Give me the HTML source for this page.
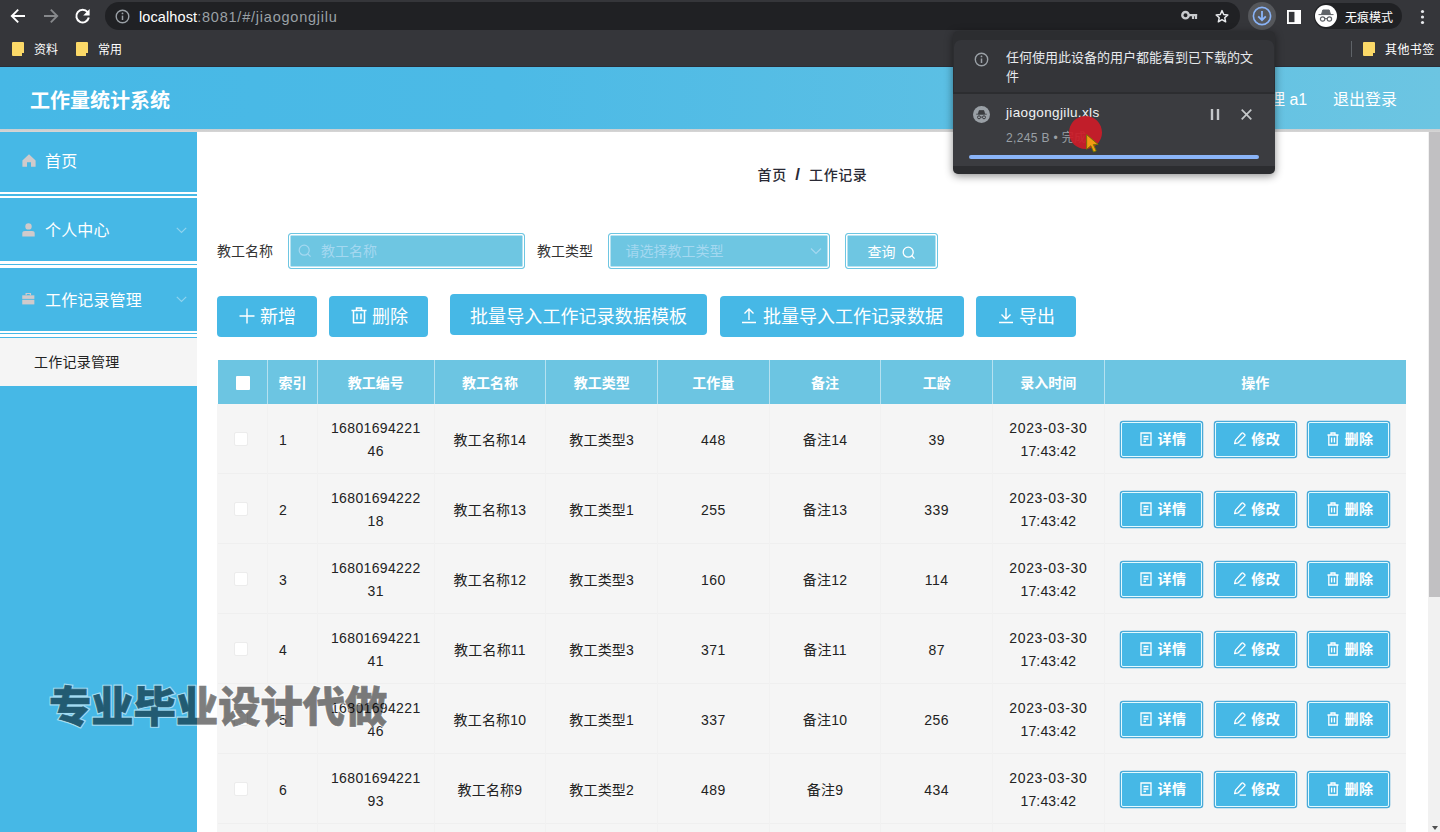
<!DOCTYPE html>
<html lang="zh-CN">
<head>
<meta charset="utf-8">
<title>工作量统计系统</title>
<style>
*{box-sizing:border-box;margin:0;padding:0}
html,body{width:1440px;height:832px;overflow:hidden;background:#fff}
body{position:relative;font-family:"Liberation Sans","Noto Sans CJK SC",sans-serif;font-size:14px;color:#333}
.abs{position:absolute}
/* ---------- browser chrome ---------- */
#chrome{position:absolute;left:0;top:0;width:1440px;height:67px;background:#35363a;border-bottom:1px solid #2b2e38}
#omni{position:absolute;left:105px;top:2px;width:1135px;height:28px;border-radius:14px;background:#202124}
#url{position:absolute;left:139px;top:1px;height:32px;line-height:32px;font-size:14.5px;color:#9aa0a6;white-space:nowrap;letter-spacing:0.1px}
#url b{font-weight:normal;color:#fff}
.bm{position:absolute;top:41px;height:18px;line-height:18px;font-size:12px;color:#fff;white-space:nowrap}
.folder{position:absolute;top:42px;width:12px;height:14px;background:#fbd968;border-radius:1px}
.folder:after{content:"";position:absolute;right:0;bottom:0;width:2px;height:3px;background:#35363a}
#chip{position:absolute;left:1314px;top:3px;width:88px;height:26px;border-radius:13px;background:#202124}
#chip .av{position:absolute;left:1px;top:2px;width:22px;height:22px;border-radius:11px;background:#fff}
#chip span{position:absolute;left:31px;top:1.5px;line-height:26px;font-size:12px;color:#fff;white-space:nowrap}
/* ---------- app header ---------- */
#hdr{position:absolute;left:0;top:67px;width:1440px;height:62px;background:linear-gradient(90deg,#46b8e6 0%,#4cbae6 35%,#6cc5e2 100%)}
#hdr .title{position:absolute;left:30px;top:0;line-height:68px;font-size:20px;font-weight:bold;color:#fff;white-space:nowrap}
#hdr .r{position:absolute;top:0;line-height:66px;font-size:16px;color:#fff;white-space:nowrap}
#hline{position:absolute;left:0;top:129px;width:1440px;height:3px;background:linear-gradient(#c4d0d6,#cfcfcf 40%,#d6d6d6)}
/* ---------- sidebar ---------- */
#side{position:absolute;left:0;top:132px;width:197px;height:700px;background:#46b8e6}
.mi{position:absolute;left:0;width:197px;color:#fff;font-size:16px;white-space:nowrap;letter-spacing:.15px}
.mi .t{position:absolute;left:45px;top:0}
.wl{position:absolute;left:0;width:197px;height:3px;background:#fff}
#sub{position:absolute;left:0;top:205.8px;width:197px;height:48.7px;background:#f5f5f5;color:#222;font-size:14px;line-height:48.6px;padding-left:34px;white-space:nowrap;letter-spacing:.25px}
/* ---------- main ---------- */
#main{position:absolute;left:197px;top:132px;width:1231px;height:700px;background:#fff}
#sb{position:absolute;left:1428px;top:132px;width:12px;height:700px;background:#f1f1f1}
#sb .th{position:absolute;left:1px;top:0;width:11px;height:464.5px;background:#c1c0c2}
#sb .ar{position:absolute;left:4px;bottom:2px;width:0;height:0;border-left:3.5px solid transparent;border-right:3.5px solid transparent;border-top:4px solid #505050}

/* ---------- content ---------- */
#bc{position:absolute;left:197px;top:163px;width:1231px;text-align:center;font-size:14px;font-weight:500;line-height:24px;color:#2a2a35;white-space:nowrap;letter-spacing:.6px}
#bc i{font-style:normal;font-weight:bold;font-size:17px;margin:0 8.5px 0 8.5px}
.lbl{position:absolute;top:233px;height:36px;line-height:36px;font-size:14px;color:#333;white-space:nowrap}
.inp{position:absolute;top:233px;height:36px;border:1px solid #6ec6e2;background:#6ec6e2;box-shadow:inset 0 0 0 1.5px #fff;border-radius:3px}
.inp .ph{position:absolute;top:0;line-height:35px;font-size:14px;color:#a4d8f0;white-space:nowrap}
.qbtn{position:absolute;left:844.5px;top:233px;width:93px;height:36px;border:1px solid #6ec6e2;background:#6ec6e2;box-shadow:inset 0 0 0 1.5px #fff;border-radius:3px;color:#fff;font-size:14px;white-space:nowrap}
.btn{position:absolute;height:41px;border-radius:4px;background:#46b8e6;color:#fff;font-size:18px;line-height:41px;white-space:nowrap}
.btn span{position:absolute;top:.8px}
.btn svg{position:absolute}

/* ---------- table ---------- */
#tb{position:absolute;left:217px;top:360px;width:1189px;height:472px;background:#f5f5f5;overflow:hidden}
#th{position:absolute;left:0;top:0;width:1189px;height:44px;background:#6cc5e2;border-left:1px solid #fff}
.hc{position:absolute;top:0;height:44px;line-height:46px;text-align:center;color:#fff;font-weight:bold;font-size:14px;border-right:1px solid #b5e1f0;white-space:nowrap}
.row{position:absolute;left:1px;width:1188px;height:70px;border-bottom:1px solid #efefef}
.c{position:absolute;top:0;height:70px;text-align:center;font-size:14px;line-height:23px;color:#222;white-space:nowrap;border-right:1px solid #f1f1f1;padding-top:1px;display:flex;align-items:center;justify-content:center}
.cb{position:absolute;left:16px;top:28px;width:14px;height:14px;background:#fff;border:1px solid #ececec;border-radius:2px}
.ab{position:absolute;top:17.5px;width:81px;height:35.5px;border:1.75px solid #e2faff;background:#46b8e6;box-shadow:0 0 0 1.25px #4aa9d8;border-radius:2px;color:#fff;font-size:14px;font-weight:bold;white-space:nowrap}
.ab span{position:absolute;left:35.5px;top:0;line-height:33.5px;letter-spacing:.6px}
.ab svg{position:absolute;left:17.5px;top:9.5px}

/* ---------- popup ---------- */
#pop{position:absolute;left:953px;top:31px;width:322px;height:143px;border-radius:5px;background:#2c2d30;box-shadow:0 2px 8px rgba(0,0,0,.45);overflow:hidden;color:#e8eaed}
#pop .it{position:absolute;left:0;top:63px;width:322px;height:72px;background:#3b3c40}
#pop .ms{position:absolute;left:1px;top:9px;width:320px;height:52px;background:#343539;border-radius:7px 7px 0 0}
#pop .m{position:absolute;left:53px;top:18px;width:256px;font-size:13px;line-height:18.5px;color:#e8eaed}
#pop .fn{position:absolute;left:53px;top:72px;font-size:13.5px;line-height:20px;color:#f1f3f4;white-space:nowrap;letter-spacing:.36px}
#pop .st{position:absolute;left:53px;top:97px;font-size:12px;line-height:20px;color:#9aa0a6;white-space:nowrap;letter-spacing:.35px}
#pop .pg{position:absolute;left:16px;top:124.3px;width:290px;height:3.5px;border-radius:2px;background:#8ab4f8}
#wm{position:absolute;left:49px;top:674px;font-family:"Noto Sans CJK SC",sans-serif;font-weight:900;font-size:42.3px;line-height:60px;color:#000;-webkit-text-stroke:.7px #000;white-space:nowrap;opacity:.5}
#wm:before{content:"专业毕业设计代做";position:absolute;left:0;top:0;z-index:-1;color:#fff;-webkit-text-stroke:3px #fff}
#clk{position:absolute;left:1069px;top:116px;width:33px;height:33px;border-radius:50%;background:rgba(205,28,40,.92)}
</style>
</head>
<body>
<div id="chrome">
  <div id="omni"></div>
  <svg class="abs" style="left:10px;top:8px" width="16" height="16" viewBox="0 0 16 16"><path d="M15 8H2.2M8.2 1.6L1.8 8L8.2 14.4" fill="none" stroke="#fff" stroke-width="1.9"/></svg>
  <svg class="abs" style="left:43px;top:8px" width="16" height="16" viewBox="0 0 16 16"><path d="M1 8H13.8M7.8 1.6L14.2 8L7.8 14.4" fill="none" stroke="#86888b" stroke-width="1.9"/></svg>
  <svg class="abs" style="left:74px;top:8px" width="17" height="17" viewBox="0 0 17 17"><path d="M13.6 4.2A6.3 6.3 0 1 0 14.8 9.6" fill="none" stroke="#fff" stroke-width="2"/><path d="M15.6 1V7.4H9.2Z" fill="#fff"/></svg>
  <svg class="abs" style="left:115px;top:9px" width="15" height="15" viewBox="0 0 15 15"><circle cx="7.5" cy="7.5" r="6.3" fill="none" stroke="#9aa0a6" stroke-width="1.4"/><path d="M7.5 6.6V11" stroke="#9aa0a6" stroke-width="1.5"/><circle cx="7.5" cy="4.4" r="0.9" fill="#9aa0a6"/></svg>
  <svg class="abs" style="left:1181px;top:10px" width="17" height="11" viewBox="0 0 17 11"><circle cx="4.5" cy="5.2" r="3.2" fill="none" stroke="#c8cacd" stroke-width="2.4"/><path d="M7.5 5.2H16.2M12 5.2V9M15 5.2V9" stroke="#c8cacd" stroke-width="2.2" fill="none"/></svg>
  <svg class="abs" style="left:1215px;top:9px" width="14" height="14" viewBox="0 0 18 17"><path d="M9 1.6L11.2 6.5L16.5 7.1L12.5 10.7L13.7 16L9 13.2L4.3 16L5.5 10.7L1.5 7.1L6.8 6.5Z" fill="none" stroke="#e8eaed" stroke-width="1.9" stroke-linejoin="round"/></svg>
  <div class="abs" style="left:1248px;top:2px;width:28px;height:28px;border-radius:14px;background:#55575b"></div>
  <svg class="abs" style="left:1252px;top:6px" width="20" height="20" viewBox="0 0 20 20"><circle cx="10" cy="10" r="8.6" fill="none" stroke="#8ab4f8" stroke-width="1.6"/><path d="M10 5V14M6.2 10.4L10 14.2L13.8 10.4" fill="none" stroke="#8ab4f8" stroke-width="1.8"/></svg>
  <svg class="abs" style="left:1287px;top:9.5px" width="14" height="14" viewBox="0 0 15 15"><rect x="1" y="1" width="13" height="13" fill="none" stroke="#fff" stroke-width="2"/><rect x="8" y="1" width="6" height="13" fill="#fff"/></svg>
  <svg class="abs" style="left:1420px;top:9px" width="5" height="16" viewBox="0 0 5 16"><circle cx="2.5" cy="2.5" r="1.6" fill="#e8eaed"/><circle cx="2.5" cy="8" r="1.6" fill="#e8eaed"/><circle cx="2.5" cy="13.5" r="1.6" fill="#e8eaed"/></svg>

  <div id="url"><b>localhost</b><span style="letter-spacing:0.78px">:8081/#/jiaogongjilu</span></div>
  <div class="folder" style="left:12px"></div><div class="bm" style="left:34px">资料</div>
  <div class="folder" style="left:76px"></div><div class="bm" style="left:98px">常用</div>
  <div class="abs" style="left:1351px;top:41px;width:1px;height:16px;background:#5f6368"></div>
  <div class="folder" style="left:1363px"></div><div class="bm" style="left:1385px;letter-spacing:.4px">其他书签</div>
  <div id="chip"><div class="av"><svg class="abs" style="left:3px;top:4px" width="16" height="14" viewBox="0 0 16 14"><path d="M0.5 5.6H15.5M3.6 5.2L4.8 1H11.2L12.4 5.2Z" fill="#5f6368" stroke="#5f6368" stroke-width="1"/><circle cx="4.6" cy="10" r="2.2" fill="none" stroke="#5f6368" stroke-width="1.2"/><circle cx="11.4" cy="10" r="2.2" fill="none" stroke="#5f6368" stroke-width="1.2"/><path d="M6.8 9.6H9.2" stroke="#5f6368" stroke-width="1.1"/></svg></div><span>无痕模式</span></div>
</div>
<div id="hdr">
  <div class="title">工作量统计系统</div>
  <div class="r" style="left:1253px">管理 a1</div>
  <div class="r" style="left:1333px">退出登录</div>
</div>
<div id="hline"></div>
<div id="side">
  <div class="mi" style="top:0;height:60px;line-height:59.6px"><svg class="abs" style="left:22px;top:22px" width="14" height="13" viewBox="0 0 14 13"><path d="M7 0.3L0.4 6.6V12.7H5V8.2H9V12.7H13.6V6.6Z" fill="#d0cacb"/></svg><span class="t">首页</span></div>
  <div class="wl" style="top:59.9px;height:2.4px"></div><div class="wl" style="top:64px;height:2.4px"></div>
  <div class="mi" style="top:67px;height:62px;line-height:64.4px"><svg class="abs" style="left:22px;top:24px" width="13" height="14" viewBox="0 0 13 14"><circle cx="6.5" cy="3.4" r="3.2" fill="#d0cacb"/><path d="M0.3 13.6V10.4Q0.3 8 3 8H10Q12.7 8 12.7 10.4V13.6Z" fill="#d0cacb"/></svg><span class="t">个人中心</span><svg class="abs" style="left:176px;top:28px" width="11" height="7" viewBox="0 0 11 7"><path d="M0.8 0.8L5.5 5.5L10.2 0.8" fill="none" stroke="#8fd3ee" stroke-width="1.2"/></svg></div>
  <div class="wl" style="top:128.8px;height:3.1px"></div><div class="wl" style="top:132.9px;height:3.1px"></div>
  <div class="mi" style="top:136px;height:62px;line-height:66px"><svg class="abs" style="left:22px;top:25.3px" width="12.6" height="11.6" viewBox="0 0 14 13"><path d="M4.6 2.6V0.5H9.4V2.6" fill="none" stroke="#d0cacb" stroke-width="1.4"/><rect x="0.2" y="2.6" width="13.6" height="4" fill="#d0cacb"/><rect x="0.2" y="7.6" width="13.6" height="5.2" fill="#d0cacb"/></svg><span class="t">工作记录管理</span><svg class="abs" style="left:176px;top:28px" width="11" height="7" viewBox="0 0 11 7"><path d="M0.8 0.8L5.5 5.5L10.2 0.8" fill="none" stroke="#8fd3ee" stroke-width="1.2"/></svg></div>
  <div class="wl" style="top:198.6px;height:2.4px"></div><div class="wl" style="top:202.4px;height:2.4px"></div>
  <div id="sub">工作记录管理</div>
</div>
<div id="main">
</div>

<div id="bc">首页<i>/</i>工作记录</div>
<div class="lbl" style="left:217px">教工名称</div>
<div class="inp" style="left:288px;width:236.5px"><svg class="abs" style="left:9px;top:10px" width="14" height="14" viewBox="0 0 14 14"><circle cx="6.2" cy="6.2" r="5" fill="none" stroke="#a4d8f0" stroke-width="1.2"/><path d="M9.8 9.8 L12.6 12.6" stroke="#a4d8f0" stroke-width="1.2"/></svg><span class="ph" style="left:32px">教工名称</span></div>
<div class="lbl" style="left:537px">教工类型</div>
<div class="inp" style="left:607.5px;width:222px"><span class="ph" style="left:17px">请选择教工类型</span><svg class="abs" style="left:201px;top:13px" width="12" height="8" viewBox="0 0 12 8"><path d="M1 1.5 L6 6.5 L11 1.5" fill="none" stroke="#a4d8f0" stroke-width="1.2"/></svg></div>
<div class="qbtn"><span class="abs" style="left:22px;top:0;line-height:37px">查询</span><svg class="abs" style="left:56px;top:12px" width="14" height="14" viewBox="0 0 14 14"><circle cx="6.2" cy="6.2" r="5" fill="none" stroke="#fff" stroke-width="1.3"/><path d="M9.8 9.8 L12.6 12.6" stroke="#fff" stroke-width="1.3"/></svg></div>

<div class="btn" style="left:217px;top:296px;width:100px"><svg style="left:22px;top:12.2px" width="16" height="16" viewBox="0 0 16 16"><path d="M8 0.5V15.5M0.5 8H15.5" stroke="#fff" stroke-width="1.4" fill="none"/></svg><span style="left:43px">新增</span></div>
<div class="btn" style="left:329px;top:296px;width:99px"><svg style="left:21.5px;top:11px" width="16" height="17" viewBox="0 0 16 17"><path d="M0.5 3.5H15.5M5.5 3.2V1H10.5V3.2M2.5 3.5V15.7H13.5V3.5M6 6.5V12.5M10 6.5V12.5" stroke="#fff" stroke-width="1.5" fill="none"/></svg><span style="left:43px">删除</span></div>
<div class="btn" style="left:450px;top:294px;width:257px"><span style="left:20px;top:3px;letter-spacing:.1px">批量导入工作记录数据模板</span></div>
<div class="btn" style="left:720px;top:296px;width:244px"><svg style="left:21px;top:11px" width="16" height="17" viewBox="0 0 16 17"><path d="M8 13V2M3.5 6.5L8 2L12.5 6.5M1 15.5H15" stroke="#fff" stroke-width="1.4" fill="none"/></svg><span style="left:43px">批量导入工作记录数据</span></div>
<div class="btn" style="left:976px;top:296px;width:100px"><svg style="left:22px;top:10.5px" width="16" height="17" viewBox="0 0 16 17"><path d="M8 1V12M3.5 7.5L8 12L12.5 7.5M1 15.5H15" stroke="#fff" stroke-width="1.4" fill="none"/></svg><span style="left:43px">导出</span></div>
<div id="tb">
<div id="th"><div class="hc" style="left:0px;width:50px"><div class="abs" style="left:18px;top:16px;width:14px;height:14px;background:#fff;border-radius:1px"></div></div><div class="hc" style="left:50px;width:50px">索引</div><div class="hc" style="left:100px;width:116.5px">教工编号</div><div class="hc" style="left:216.5px;width:111.80000000000001px">教工名称</div><div class="hc" style="left:328.3px;width:111.69999999999999px">教工类型</div><div class="hc" style="left:440px;width:111.70000000000005px">工作量</div><div class="hc" style="left:551.7px;width:111.69999999999993px">备注</div><div class="hc" style="left:663.4px;width:111.60000000000002px">工龄</div><div class="hc" style="left:775px;width:111.70000000000005px">录入时间</div><div class="hc" style="left:886.7px;width:301.29999999999995px;border-right:none">操作</div></div>
<div class="row" style="top:44px"><div class="c" style="left:0px;width:50px"><div class="cb"></div></div><div class="c" style="padding-top:2px;letter-spacing:.45px;left:50px;width:50px;justify-content:flex-start;padding-left:11px">1</div><div class="c" style="left:100px;width:116.5px"><span style="letter-spacing:.36px">16801694221<br>46</span></div><div class="c" style="padding-top:2px;letter-spacing:.2px;left:216.5px;width:111.80000000000001px">教工名称14</div><div class="c" style="padding-top:2px;letter-spacing:.2px;left:328.3px;width:111.69999999999999px">教工类型3</div><div class="c" style="padding-top:2px;letter-spacing:.45px;left:440px;width:111.70000000000005px">448</div><div class="c" style="padding-top:2px;letter-spacing:.2px;left:551.7px;width:111.69999999999993px">备注14</div><div class="c" style="padding-top:2px;letter-spacing:.45px;left:663.4px;width:111.60000000000002px">39</div><div class="c" style="left:775px;width:111.70000000000005px"><span><span style="letter-spacing:.65px">2023-03-30</span><br><span style="letter-spacing:.15px">17:43:42</span></span></div><div class="ab" style="left:903px"><svg width="12" height="14" viewBox="0 0 12 14"><path d="M1 1H11V13H1ZM3.5 4.5H8.5M3.5 7H8.5M3.5 9.5H6" fill="none" stroke="#fff" stroke-width="1.3"/></svg><span>详情</span></div><div class="ab" style="left:996.7px"><svg width="14" height="14" viewBox="0 0 14 14"><path d="M1.6 11.6L2.5 8.1L8.7 1.2Q9.5 0.6 10.3 1.3L11.6 2.5Q12.3 3.3 11.6 4.1L5.2 10.8ZM6.6 13.2H13" fill="none" stroke="#fff" stroke-width="1.3" stroke-linejoin="round"/></svg><span>修改</span></div><div class="ab" style="left:1090px"><svg width="12" height="14" viewBox="0 0 12 14"><path d="M0.5 3H11.5M4 2.8V1H8V2.8M1.8 3V13H10.2V3M4.6 5.5V10.5M7.4 5.5V10.5" fill="none" stroke="#fff" stroke-width="1.3"/></svg><span>删除</span></div></div>
<div class="row" style="top:114px"><div class="c" style="left:0px;width:50px"><div class="cb"></div></div><div class="c" style="padding-top:2px;letter-spacing:.45px;left:50px;width:50px;justify-content:flex-start;padding-left:11px">2</div><div class="c" style="left:100px;width:116.5px"><span style="letter-spacing:.36px">16801694222<br>18</span></div><div class="c" style="padding-top:2px;letter-spacing:.2px;left:216.5px;width:111.80000000000001px">教工名称13</div><div class="c" style="padding-top:2px;letter-spacing:.2px;left:328.3px;width:111.69999999999999px">教工类型1</div><div class="c" style="padding-top:2px;letter-spacing:.45px;left:440px;width:111.70000000000005px">255</div><div class="c" style="padding-top:2px;letter-spacing:.2px;left:551.7px;width:111.69999999999993px">备注13</div><div class="c" style="padding-top:2px;letter-spacing:.45px;left:663.4px;width:111.60000000000002px">339</div><div class="c" style="left:775px;width:111.70000000000005px"><span><span style="letter-spacing:.65px">2023-03-30</span><br><span style="letter-spacing:.15px">17:43:42</span></span></div><div class="ab" style="left:903px"><svg width="12" height="14" viewBox="0 0 12 14"><path d="M1 1H11V13H1ZM3.5 4.5H8.5M3.5 7H8.5M3.5 9.5H6" fill="none" stroke="#fff" stroke-width="1.3"/></svg><span>详情</span></div><div class="ab" style="left:996.7px"><svg width="14" height="14" viewBox="0 0 14 14"><path d="M1.6 11.6L2.5 8.1L8.7 1.2Q9.5 0.6 10.3 1.3L11.6 2.5Q12.3 3.3 11.6 4.1L5.2 10.8ZM6.6 13.2H13" fill="none" stroke="#fff" stroke-width="1.3" stroke-linejoin="round"/></svg><span>修改</span></div><div class="ab" style="left:1090px"><svg width="12" height="14" viewBox="0 0 12 14"><path d="M0.5 3H11.5M4 2.8V1H8V2.8M1.8 3V13H10.2V3M4.6 5.5V10.5M7.4 5.5V10.5" fill="none" stroke="#fff" stroke-width="1.3"/></svg><span>删除</span></div></div>
<div class="row" style="top:184px"><div class="c" style="left:0px;width:50px"><div class="cb"></div></div><div class="c" style="padding-top:2px;letter-spacing:.45px;left:50px;width:50px;justify-content:flex-start;padding-left:11px">3</div><div class="c" style="left:100px;width:116.5px"><span style="letter-spacing:.36px">16801694222<br>31</span></div><div class="c" style="padding-top:2px;letter-spacing:.2px;left:216.5px;width:111.80000000000001px">教工名称12</div><div class="c" style="padding-top:2px;letter-spacing:.2px;left:328.3px;width:111.69999999999999px">教工类型3</div><div class="c" style="padding-top:2px;letter-spacing:.45px;left:440px;width:111.70000000000005px">160</div><div class="c" style="padding-top:2px;letter-spacing:.2px;left:551.7px;width:111.69999999999993px">备注12</div><div class="c" style="padding-top:2px;letter-spacing:.45px;left:663.4px;width:111.60000000000002px">114</div><div class="c" style="left:775px;width:111.70000000000005px"><span><span style="letter-spacing:.65px">2023-03-30</span><br><span style="letter-spacing:.15px">17:43:42</span></span></div><div class="ab" style="left:903px"><svg width="12" height="14" viewBox="0 0 12 14"><path d="M1 1H11V13H1ZM3.5 4.5H8.5M3.5 7H8.5M3.5 9.5H6" fill="none" stroke="#fff" stroke-width="1.3"/></svg><span>详情</span></div><div class="ab" style="left:996.7px"><svg width="14" height="14" viewBox="0 0 14 14"><path d="M1.6 11.6L2.5 8.1L8.7 1.2Q9.5 0.6 10.3 1.3L11.6 2.5Q12.3 3.3 11.6 4.1L5.2 10.8ZM6.6 13.2H13" fill="none" stroke="#fff" stroke-width="1.3" stroke-linejoin="round"/></svg><span>修改</span></div><div class="ab" style="left:1090px"><svg width="12" height="14" viewBox="0 0 12 14"><path d="M0.5 3H11.5M4 2.8V1H8V2.8M1.8 3V13H10.2V3M4.6 5.5V10.5M7.4 5.5V10.5" fill="none" stroke="#fff" stroke-width="1.3"/></svg><span>删除</span></div></div>
<div class="row" style="top:254px"><div class="c" style="left:0px;width:50px"><div class="cb"></div></div><div class="c" style="padding-top:2px;letter-spacing:.45px;left:50px;width:50px;justify-content:flex-start;padding-left:11px">4</div><div class="c" style="left:100px;width:116.5px"><span style="letter-spacing:.36px">16801694221<br>41</span></div><div class="c" style="padding-top:2px;letter-spacing:.2px;left:216.5px;width:111.80000000000001px">教工名称11</div><div class="c" style="padding-top:2px;letter-spacing:.2px;left:328.3px;width:111.69999999999999px">教工类型3</div><div class="c" style="padding-top:2px;letter-spacing:.45px;left:440px;width:111.70000000000005px">371</div><div class="c" style="padding-top:2px;letter-spacing:.2px;left:551.7px;width:111.69999999999993px">备注11</div><div class="c" style="padding-top:2px;letter-spacing:.45px;left:663.4px;width:111.60000000000002px">87</div><div class="c" style="left:775px;width:111.70000000000005px"><span><span style="letter-spacing:.65px">2023-03-30</span><br><span style="letter-spacing:.15px">17:43:42</span></span></div><div class="ab" style="left:903px"><svg width="12" height="14" viewBox="0 0 12 14"><path d="M1 1H11V13H1ZM3.5 4.5H8.5M3.5 7H8.5M3.5 9.5H6" fill="none" stroke="#fff" stroke-width="1.3"/></svg><span>详情</span></div><div class="ab" style="left:996.7px"><svg width="14" height="14" viewBox="0 0 14 14"><path d="M1.6 11.6L2.5 8.1L8.7 1.2Q9.5 0.6 10.3 1.3L11.6 2.5Q12.3 3.3 11.6 4.1L5.2 10.8ZM6.6 13.2H13" fill="none" stroke="#fff" stroke-width="1.3" stroke-linejoin="round"/></svg><span>修改</span></div><div class="ab" style="left:1090px"><svg width="12" height="14" viewBox="0 0 12 14"><path d="M0.5 3H11.5M4 2.8V1H8V2.8M1.8 3V13H10.2V3M4.6 5.5V10.5M7.4 5.5V10.5" fill="none" stroke="#fff" stroke-width="1.3"/></svg><span>删除</span></div></div>
<div class="row" style="top:324px"><div class="c" style="left:0px;width:50px"><div class="cb"></div></div><div class="c" style="padding-top:2px;letter-spacing:.45px;left:50px;width:50px;justify-content:flex-start;padding-left:11px">5</div><div class="c" style="left:100px;width:116.5px"><span style="letter-spacing:.36px">16801694221<br>46</span></div><div class="c" style="padding-top:2px;letter-spacing:.2px;left:216.5px;width:111.80000000000001px">教工名称10</div><div class="c" style="padding-top:2px;letter-spacing:.2px;left:328.3px;width:111.69999999999999px">教工类型1</div><div class="c" style="padding-top:2px;letter-spacing:.45px;left:440px;width:111.70000000000005px">337</div><div class="c" style="padding-top:2px;letter-spacing:.2px;left:551.7px;width:111.69999999999993px">备注10</div><div class="c" style="padding-top:2px;letter-spacing:.45px;left:663.4px;width:111.60000000000002px">256</div><div class="c" style="left:775px;width:111.70000000000005px"><span><span style="letter-spacing:.65px">2023-03-30</span><br><span style="letter-spacing:.15px">17:43:42</span></span></div><div class="ab" style="left:903px"><svg width="12" height="14" viewBox="0 0 12 14"><path d="M1 1H11V13H1ZM3.5 4.5H8.5M3.5 7H8.5M3.5 9.5H6" fill="none" stroke="#fff" stroke-width="1.3"/></svg><span>详情</span></div><div class="ab" style="left:996.7px"><svg width="14" height="14" viewBox="0 0 14 14"><path d="M1.6 11.6L2.5 8.1L8.7 1.2Q9.5 0.6 10.3 1.3L11.6 2.5Q12.3 3.3 11.6 4.1L5.2 10.8ZM6.6 13.2H13" fill="none" stroke="#fff" stroke-width="1.3" stroke-linejoin="round"/></svg><span>修改</span></div><div class="ab" style="left:1090px"><svg width="12" height="14" viewBox="0 0 12 14"><path d="M0.5 3H11.5M4 2.8V1H8V2.8M1.8 3V13H10.2V3M4.6 5.5V10.5M7.4 5.5V10.5" fill="none" stroke="#fff" stroke-width="1.3"/></svg><span>删除</span></div></div>
<div class="row" style="top:394px"><div class="c" style="left:0px;width:50px"><div class="cb"></div></div><div class="c" style="padding-top:2px;letter-spacing:.45px;left:50px;width:50px;justify-content:flex-start;padding-left:11px">6</div><div class="c" style="left:100px;width:116.5px"><span style="letter-spacing:.36px">16801694221<br>93</span></div><div class="c" style="padding-top:2px;letter-spacing:.2px;left:216.5px;width:111.80000000000001px">教工名称9</div><div class="c" style="padding-top:2px;letter-spacing:.2px;left:328.3px;width:111.69999999999999px">教工类型2</div><div class="c" style="padding-top:2px;letter-spacing:.45px;left:440px;width:111.70000000000005px">489</div><div class="c" style="padding-top:2px;letter-spacing:.2px;left:551.7px;width:111.69999999999993px">备注9</div><div class="c" style="padding-top:2px;letter-spacing:.45px;left:663.4px;width:111.60000000000002px">434</div><div class="c" style="left:775px;width:111.70000000000005px"><span><span style="letter-spacing:.65px">2023-03-30</span><br><span style="letter-spacing:.15px">17:43:42</span></span></div><div class="ab" style="left:903px"><svg width="12" height="14" viewBox="0 0 12 14"><path d="M1 1H11V13H1ZM3.5 4.5H8.5M3.5 7H8.5M3.5 9.5H6" fill="none" stroke="#fff" stroke-width="1.3"/></svg><span>详情</span></div><div class="ab" style="left:996.7px"><svg width="14" height="14" viewBox="0 0 14 14"><path d="M1.6 11.6L2.5 8.1L8.7 1.2Q9.5 0.6 10.3 1.3L11.6 2.5Q12.3 3.3 11.6 4.1L5.2 10.8ZM6.6 13.2H13" fill="none" stroke="#fff" stroke-width="1.3" stroke-linejoin="round"/></svg><span>修改</span></div><div class="ab" style="left:1090px"><svg width="12" height="14" viewBox="0 0 12 14"><path d="M0.5 3H11.5M4 2.8V1H8V2.8M1.8 3V13H10.2V3M4.6 5.5V10.5M7.4 5.5V10.5" fill="none" stroke="#fff" stroke-width="1.3"/></svg><span>删除</span></div></div>
<div class="row" style="top:464px"><div class="c" style="left:0px;width:50px"><div class="cb"></div></div><div class="c" style="padding-top:2px;letter-spacing:.45px;left:50px;width:50px;justify-content:flex-start;padding-left:11px">7</div><div class="c" style="left:100px;width:116.5px"><span style="letter-spacing:.36px">16801694221<br>98</span></div><div class="c" style="padding-top:2px;letter-spacing:.2px;left:216.5px;width:111.80000000000001px">教工名称8</div><div class="c" style="padding-top:2px;letter-spacing:.2px;left:328.3px;width:111.69999999999999px">教工类型2</div><div class="c" style="padding-top:2px;letter-spacing:.45px;left:440px;width:111.70000000000005px">120</div><div class="c" style="padding-top:2px;letter-spacing:.2px;left:551.7px;width:111.69999999999993px">备注8</div><div class="c" style="padding-top:2px;letter-spacing:.45px;left:663.4px;width:111.60000000000002px">77</div><div class="c" style="left:775px;width:111.70000000000005px"><span><span style="letter-spacing:.65px">2023-03-30</span><br><span style="letter-spacing:.15px">17:43:42</span></span></div><div class="ab" style="left:903px"><svg width="12" height="14" viewBox="0 0 12 14"><path d="M1 1H11V13H1ZM3.5 4.5H8.5M3.5 7H8.5M3.5 9.5H6" fill="none" stroke="#fff" stroke-width="1.3"/></svg><span>详情</span></div><div class="ab" style="left:996.7px"><svg width="14" height="14" viewBox="0 0 14 14"><path d="M1.6 11.6L2.5 8.1L8.7 1.2Q9.5 0.6 10.3 1.3L11.6 2.5Q12.3 3.3 11.6 4.1L5.2 10.8ZM6.6 13.2H13" fill="none" stroke="#fff" stroke-width="1.3" stroke-linejoin="round"/></svg><span>修改</span></div><div class="ab" style="left:1090px"><svg width="12" height="14" viewBox="0 0 12 14"><path d="M0.5 3H11.5M4 2.8V1H8V2.8M1.8 3V13H10.2V3M4.6 5.5V10.5M7.4 5.5V10.5" fill="none" stroke="#fff" stroke-width="1.3"/></svg><span>删除</span></div></div>
</div>

<div id="pop">
  <div class="ms"></div><div class="it"></div>
  <svg class="abs" style="left:21px;top:21px" width="15" height="15" viewBox="0 0 15 15"><circle cx="7.5" cy="7.5" r="6.2" fill="none" stroke="#9aa0a6" stroke-width="1.4"/><path d="M7.5 6.6V11" stroke="#9aa0a6" stroke-width="1.5"/><circle cx="7.5" cy="4.4" r="0.9" fill="#9aa0a6"/></svg>
  <div class="m">任何使用此设备的用户都能看到已下载的文件</div>
  <svg class="abs" style="left:20px;top:75px" width="17" height="17" viewBox="0 0 17 17"><circle cx="8.5" cy="8.5" r="8.5" fill="#9aa0a6"/><path d="M3.2 8.2H13.8M5.3 8L6.2 4.6H10.8L11.7 8Z" fill="#3b3c40" stroke="#3b3c40" stroke-width="0.8"/><circle cx="6" cy="11.3" r="1.5" fill="none" stroke="#3b3c40" stroke-width="1"/><circle cx="11" cy="11.3" r="1.5" fill="none" stroke="#3b3c40" stroke-width="1"/><path d="M7.5 11.1H9.5" stroke="#3b3c40" stroke-width="0.9"/></svg>
  <div class="fn">jiaogongjilu.xls</div>
  <div class="st">2,245 B • 完成</div>
  <svg class="abs" style="left:257px;top:78px" width="10" height="11" viewBox="0 0 10 11"><path d="M2 0V11M8 0V11" stroke="#c4c7c9" stroke-width="2.4"/></svg>
  <svg class="abs" style="left:288px;top:78px" width="11" height="11" viewBox="0 0 11 11"><path d="M0.7 0.7L10.3 10.3M10.3 0.7L0.7 10.3" stroke="#c4c7c9" stroke-width="1.7"/></svg>
  <div class="pg"></div>
</div>
<div id="wm">专业毕业设计代做</div>
<div id="clk"></div>
<svg class="abs" style="left:1085px;top:132.5px" width="15.4" height="20.9" viewBox="0 0 14 19"><path d="M1.5 1.5L12 10.5H7.6L10.2 16.2L7.8 17.3L5.3 11.6L1.5 14.8Z" fill="#f39a12" stroke="#6b7a00" stroke-width="0.8"/></svg>

<div id="sb"><div class="th"></div><div class="ar"></div></div>
</body>
</html>
